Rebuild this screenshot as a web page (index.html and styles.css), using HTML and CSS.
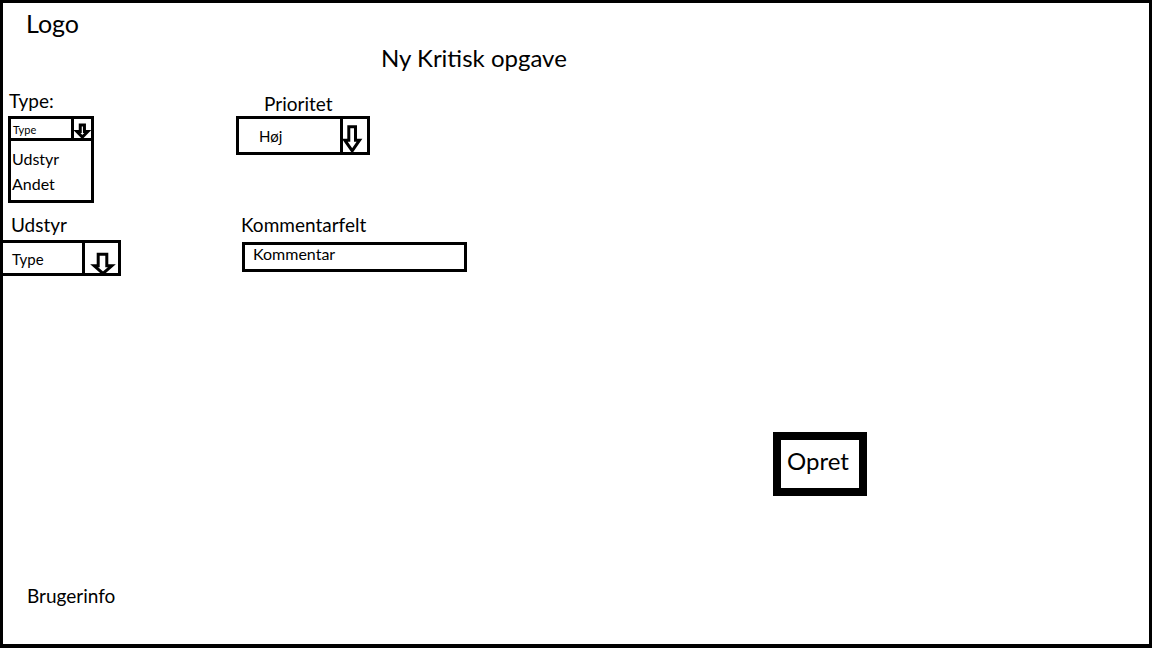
FILE: index.html
```html
<!DOCTYPE html>
<html lang="da">
<head>
  <meta charset="UTF-8">
  <title>Ny Kritisk opgave</title>
  <link rel="stylesheet" href="styles.css">
</head>
<body>
  <div class="frame">
    <div class="logo">Logo</div>
    <h1 class="title">Ny Kritisk opgave</h1>

    <div class="form">
      <div class="field field-type">
        <label>Type:</label>
        <div class="dropdown">
          <div class="select select-small">
            <span class="select-value">Type</span>
            <span class="select-arrow">
              <svg width="17" height="19" viewBox="0 0 17 19">
                <polygon points="6.25,5.95 10.45,5.95 10.45,12.55 13.75,12.55 8.35,18 2.95,12.55 6.25,12.55" stroke-width="2.5"/>
              </svg>
            </span>
          </div>
          <ul class="options">
            <li>Udstyr</li>
            <li>Andet</li>
          </ul>
        </div>
      </div>

      <div class="field field-priority">
        <label>Prioritet</label>
        <div class="select select-priority">
          <span class="select-value">Høj</span>
          <span class="select-arrow">
            <svg width="24" height="33" viewBox="0 0 24 33">
              <polygon points="5.8,7.8 12.5,7.8 12.5,21.2 16.5,21.2 9.2,31.8 1.8,21.2 5.8,21.2"/>
            </svg>
          </span>
        </div>
      </div>

      <div class="field field-equipment">
        <label>Udstyr</label>
        <div class="select select-equipment">
          <span class="select-value">Type</span>
          <span class="select-arrow">
            <svg width="33" height="30" viewBox="0 0 33 30">
              <polygon points="13.2,11.2 21.8,11.2 21.8,22.8 26.8,22.8 18,30.4 9.2,22.8 13.2,22.8"/>
            </svg>
          </span>
        </div>
      </div>

      <div class="field field-comment">
        <label>Kommentarfelt</label>
        <div class="comment-box">Kommentar</div>
      </div>
    </div>

    <div class="actions">
      <button class="btn-create">Opret</button>
    </div>

    <div class="user-info">Brugerinfo</div>
  </div>
</body>
</html>
```

FILE: styles.css
```css
body {
  margin: 0;
  background-color: #ffffff;
  color: #000000;
  font-family: 'Lato', sans-serif;
}

.frame {
  width: 1152px;
  height: 648px;
  box-sizing: border-box;
  border: 3px solid #000;
  border-bottom-width: 4px;
  display: flex;
  flex-direction: column;
}

.logo {
  margin: 5px 0 0 23px;
  font-size: 25px;
  line-height: 30px;
}

.title {
  margin: 5px 0 0 378px;
  font-size: 24px;
  font-weight: normal;
  line-height: 30px;
}

/* formular */
.form {
  display: grid;
  grid-template-columns: 233px auto;
  justify-content: start;
  align-items: start;
  row-gap: 11px;
  margin-top: 17px;
}

.field label {
  display: block;
  font-size: 19px;
  line-height: 22px;
}

.field-type label { margin-left: 6px; }
.field-type .dropdown { margin: 4px 0 0 5px; }

.field-priority label { margin: 3px 0 0 28px; }
.field-priority .select { margin-top: 1px; }

.field-equipment label { margin-left: 8px; }
.field-equipment .select { margin: 4px 0 0 -3px; }

.field-comment label { margin-left: 5px; }
.field-comment .comment-box { margin: 6px 0 0 6px; }

.select {
  display: flex;
  box-sizing: border-box;
  border: 3px solid #000;
  background: #fff;
}

.select-value {
  flex: 1;
  line-height: 1;
}

.select-arrow {
  display: flex;
  border-left: 3px solid #000;
}

.select-arrow svg {
  overflow: visible;
}

.select-arrow polygon {
  fill: #fff;
  stroke: #000;
  stroke-width: 3;
  stroke-linejoin: miter;
}

.select-small {
  width: 86px;
  height: 25px;
}

.select-small .select-value {
  font-size: 11px;
  padding: 5px 0 0 2px;
}

.select-small .select-arrow { width: 17px; }

.options {
  list-style: none;
  margin: 0;
  width: 86px;
  box-sizing: border-box;
  padding: 5px 0 4px 1px;
  border: 3px solid #000;
  border-top: none;
  font-size: 16px;
  line-height: 25px;
}

.select-priority {
  width: 134px;
  height: 39px;
}

.select-priority .select-value {
  font-size: 15px;
  padding: 10px 0 0 20px;
}

.select-priority .select-arrow { width: 24px; }

.select-equipment {
  width: 121px;
  height: 36px;
}

.select-equipment .select-value {
  font-size: 15px;
  padding: 9px 0 0 9px;
}

.select-equipment .select-arrow { width: 33px; }

.comment-box {
  width: 225px;
  height: 30px;
  box-sizing: border-box;
  border: 3px solid #000;
  padding: 1px 0 0 8px;
  font-size: 16px;
  line-height: 15px;
}

.actions {
  margin: 156px 0 0 770px;
}

.btn-create {
  display: flex;
  align-items: flex-start;
  width: 94px;
  height: 64px;
  box-sizing: border-box;
  border: 8px solid #000;
  background: #fff;
  padding: 9px 0 0 6px;
  font-family: inherit;
  font-size: 24px;
  line-height: 1;
  color: #000;
}

.user-info {
  margin: auto 0 37px 24px;
  font-size: 19px;
  line-height: 22px;
}
```
